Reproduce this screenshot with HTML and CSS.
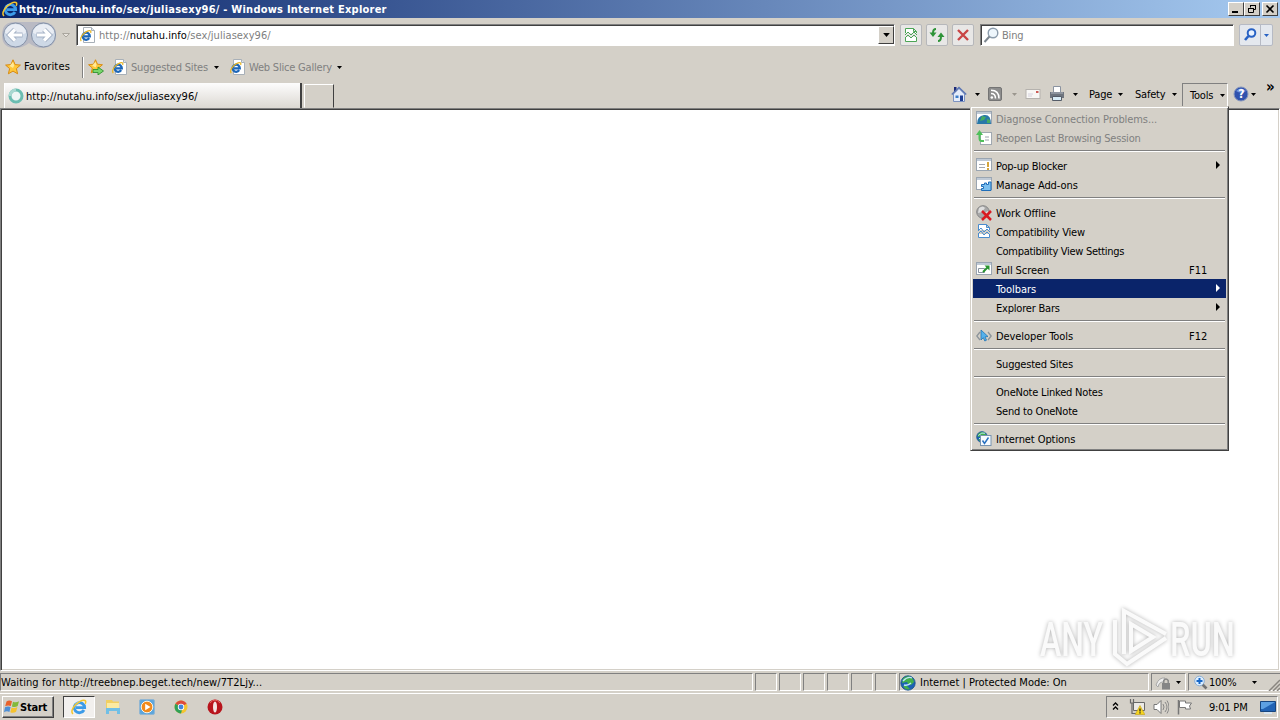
FILE: index.html
```html
<!DOCTYPE html>
<html lang="en">
<head>
    <meta charset="UTF-8">
    <meta name="viewport" content="width=device-width, initial-scale=1.0">
    <title>Windows Internet Explorer</title>
    <link rel="stylesheet" href="styles.css">
</head>
<body>

    <!-- Shared icons -->
    <svg class="sprite">
        <symbol id="ie" viewBox="0 0 16 16">
            <path d="M13 11A5.200 5 0 1 1 13.600 8.600H5" fill="none" stroke="#3c9be8" stroke-width="2.900"/>
            <path d="M4 7q1-3.500 4.500-3.600" fill="none" stroke="#a8e0ff" stroke-width="1.200"/>
            <path d="M2 15C-1 12.500 3 5.500 9 2.300c4.500-2.200 6.800-.8 5.200 2.500" fill="none" stroke="#f5c52c" stroke-width="1.500"/>
        </symbol>
        <symbol id="iepage" viewBox="0 0 16 16">
            <path d="M3.500 .5h8l3 3v12h-11z" fill="#fff" stroke="#a8b0b8"/>
            <path d="M11.500 .5v3h3" fill="#dde6ee" stroke="#a8b0b8"/>
            <path d="M9.200 11.200A3.600 3.600 0 1 1 9.800 9.300H4" fill="none" stroke="#1c66b8" stroke-width="2.300"/>
            <path d="M1.300 14C-.8 12 2.600 6.600 6.600 4.600c3.400-1.600 5-1 4 1.400" fill="none" stroke="#e8b420" stroke-width="1.200"/>
        </symbol>
        <symbol id="star" viewBox="0 0 16 16">
            <path d="M8 .8l2.100 4.800 5.300.5-4 3.500 1.200 5.200L8 12.100l-4.600 2.700 1.200-5.200-4-3.500 5.300-.5z" fill="#ffc83a" stroke="#d88a10"/>
            <path d="M8 3l1.200 3.400L8 9 4.500 7z" fill="#ffe998"/>
        </symbol>
        <symbol id="caret" viewBox="0 0 5 3"><path d="M0 0h5L2.500 3z" fill="currentColor"/></symbol>
        <symbol id="win" viewBox="0 0 16 14">
            <rect x=".5" y=".5" width="15" height="12" fill="#fff" stroke="#9aa5b1"/>
            <path d="M1 2h14" stroke="#c0cad6" stroke-width="2"/>
        </symbol>
        <symbol id="globe" viewBox="0 0 16 16">
            <circle cx="8" cy="8" r="7.200" fill="#1c62b4" stroke="#164c88" stroke-width=".8"/>
            <path d="M3 3.500Q7 0 11 2q3 2 3 5l-3 3-3-1-1-2-5 1zM3 11l4 0 3 3q-4 2-7-3z" fill="#43b04a"/>
            <path d="M3 6q5-5 9-3M4 10q4 1 7-2" fill="none" stroke="#bfe6ff" stroke-width="1.300"/>
        </symbol>
    </svg>

    <div class="titlebar">
        <svg class="title-icon"><use href="#ie"/></svg>
        <span class="title-text">http://nutahu.info/sex/juliasexy96/ - Windows Internet Explorer</span>
        <div class="win-buttons">
            <button class="win-btn"><svg viewBox="0 0 12 10"><path d="M2 8h6" stroke="#000" stroke-width="2"/></svg></button>
            <button class="win-btn"><svg viewBox="0 0 12 10"><path d="M4.500 3.500v-2h5v4h-2M4 1.500h6M2.500 4.500h5v4h-5zM2 4.500h6" fill="none" stroke="#000"/></svg></button>
            <button class="win-btn close"><svg viewBox="0 0 12 10"><path d="M2.500 1.500l7 7M9.500 1.500l-7 7" stroke="#000" stroke-width="1.600"/></svg></button>
        </div>
    </div>

    <div class="navbar">
        <svg class="nav-arrows" viewBox="0 0 58 30">
            <path d="M15 2h28q13 1 13 13T43 28q-8 0-14-5-6 5-14 5Q2 28 2 15T15 2z" fill="#b9bac4"/>
            <circle cx="15.500" cy="15" r="12" fill="#cdd8e6" stroke="#8390a6"/>
            <circle cx="43.500" cy="15" r="12" fill="#cdd8e6" stroke="#8390a6"/>
            <path d="M5 13a10.500 9 0 0 1 21 0q-10 5-21 0zM33 13a10.500 9 0 0 1 21 0q-10 5-21 0z" fill="#e9edf4"/>
            <path d="M22.500 15H11M15 9.500L9.500 15l5.500 5.500M36.500 15H48M44 9.500l5.500 5.500-5.500 5.500" fill="none" stroke="#a3b0c4" stroke-width="5"/>
            <path d="M22 15H11M15 9.500L9.500 15l5.500 5.500M37 15h11M44 9.500l5.500 5.500-5.500 5.500" fill="none" stroke="#fff" stroke-width="3.200"/>
        </svg>
        <svg class="history" viewBox="0 0 8 5"><path d="M.5 .5h7L4 4z" fill="#e8e4de" stroke="#aaa69e"/></svg>
        <div class="address">
            <svg class="ico"><use href="#iepage"/></svg>
            <span class="url">http://<b>nutahu.info</b>/sex/juliasexy96/</span>
            <button class="drop"><svg class="caret big"><use href="#caret"/></svg></button>
        </div>
        <button class="tool-btn"><svg viewBox="0 0 16 16"><path d="M2.500 6V1.500h8l3 3V6M2.500 10v4.500h11V10M10.500 1.500v3h3" fill="#fff" stroke="#4ca556"/><path d="M2 8l3-3 3 3 3-3 3 3M2 11l3-3 3 3 3-3 3 3" fill="none" stroke="#4ca556"/></svg></button>
        <button class="tool-btn"><svg viewBox="0 0 16 16"><path d="M7 2Q4 2 4 6M9 14q3 0 3-4.500" fill="none" stroke="#2e9338" stroke-width="2"/><path d="M.5 5.500h7L4 10zM8.500 10h7L12 5.500z" fill="#2e9338"/></svg></button>
        <button class="tool-btn"><svg viewBox="0 0 16 16"><path d="M3 3l10 10M13 3L3 13" stroke="#c94545" stroke-width="2.400"/></svg></button>
        <div class="search">
            <svg class="ico" viewBox="0 0 16 16"><circle cx="10" cy="6" r="4.800" fill="#eef6fc" stroke="#8c9cac" stroke-width="1.400"/><path d="M6.500 9.500L1.500 15" stroke="#7d8790" stroke-width="2"/></svg>
            <span>Bing</span>
        </div>
        <div class="search-btns">
            <button><svg class="ico" viewBox="0 0 16 16"><circle cx="9.500" cy="6" r="3.800" fill="#e8f2ff" stroke="#2862c4" stroke-width="2"/><path d="M6.500 9L3 13" stroke="#2862c4" stroke-width="2.600"/></svg></button>
            <button class="narrow"><svg class="caret blue"><use href="#caret"/></svg></button>
        </div>
    </div>

    <div class="favbar">
        <svg class="ico"><use href="#star"/></svg>
        <span class="fav-label">Favorites</span>
        <div class="divider"></div>
        <svg class="ico add" viewBox="0 0 16 16"><use href="#star" width="15" height="15"/><path d="M5 10.500h5V8l5.500 4-5.500 4v-2.500H5z" fill="#7ad66c" stroke="#238a25" stroke-width=".8"/></svg>
        <svg class="ico page"><use href="#iepage"/></svg>
        <span class="dim suggested">Suggested Sites</span>
        <svg class="caret"><use href="#caret"/></svg>
        <svg class="ico page2"><use href="#iepage"/></svg>
        <span class="dim slice">Web Slice Gallery</span>
        <svg class="caret"><use href="#caret"/></svg>
    </div>

    <div class="tabrow">
        <div class="tab">
            <svg class="ico" viewBox="0 0 16 16"><circle cx="8" cy="8" r="6" fill="#eef6f5" stroke="#6bbdb1" stroke-width="3"/><path d="M2 8a6 6 0 0 1 6-6" fill="none" stroke="#a9d8d1" stroke-width="3"/></svg>
            <span>http://nutahu.info/sex/juliasexy96/</span>
        </div>
        <div class="newtab"></div>
        <div class="commands">
            <svg class="ico home" viewBox="0 0 16 16"><path d="M3 1h2.500v5H3z" fill="#1c2a78"/><path d="M2.500 8L8 2.500 13.500 8v7.500h-11z" fill="#e4ecfa" stroke="#7c92c0"/><path d="M.8 8.500L8 1.500l7.200 7" fill="none" stroke="#5a75b4" stroke-width="1.500"/><path d="M9 9.500h3V15H9z" fill="#1f3f94"/><path d="M4.500 9.500h3V12h-3z" fill="#3c7ec8"/></svg>
            <svg class="caret c1"><use href="#caret"/></svg>
            <svg class="ico rss" viewBox="0 0 16 16"><rect x="1.500" y="1.500" width="13" height="13" rx="1.500" fill="#8d8d8d" stroke="#747474"/><circle cx="4.800" cy="11.500" r="1.300" fill="#fff"/><path d="M4 7.500q4.500 0 4.500 5M4 4.200q8 0 8 8.300" fill="none" stroke="#fff" stroke-width="1.500"/></svg>
            <svg class="caret c2 off"><use href="#caret"/></svg>
            <svg class="ico mail" viewBox="0 0 16 16"><rect x="1" y="3.500" width="14" height="9" fill="#f8f7f5" stroke="#b5b2ae"/><path d="M3 8h5M3 10h4" stroke="#d4d0dc"/><path d="M11 5h2.500v2H11z" fill="#cc5b55"/></svg>
            <svg class="ico print" viewBox="0 0 16 16"><path d="M4.500 6V.5h7V6" fill="#fff" stroke="#8b93a0"/><path d="M1 6h14v6H1z" fill="#6e747e"/><path d="M2 7h12" stroke="#aeb5c0"/><path d="M3.500 10.500h9v4h-9z" fill="#d9edf8" stroke="#555c68"/></svg>
            <svg class="caret c3"><use href="#caret"/></svg>
            <span class="cmd page-cmd">Page</span><svg class="caret"><use href="#caret"/></svg>
            <span class="cmd safety-cmd">Safety</span><svg class="caret"><use href="#caret"/></svg>
            <div class="tools"><span>Tools</span><svg class="caret"><use href="#caret"/></svg></div>
            <svg class="ico help" viewBox="0 0 16 16"><circle cx="8" cy="8" r="7" fill="#3153ae" stroke="#8797bd"/><path d="M3 5q5-5 10 0-5 3-10 0" fill="#7596df"/><text x="5.200" y="12.200">?</text></svg>
            <svg class="caret"><use href="#caret"/></svg>
            <span class="more">»</span>
        </div>
    </div>

    <div class="viewport">
        <svg class="watermark" viewBox="0 0 210 66">
            <g class="mark">
                <text x="5" y="52" textLength="63" lengthAdjust="spacingAndGlyphs">ANY</text>
                <text x="135" y="52" textLength="65" lengthAdjust="spacingAndGlyphs">RUN</text>
                <path d="M80 16v34l12 10 39-26M89 50V7l42 23M96 20v27l22-14z"/>
            </g>
        </svg>
    </div>

    <div class="statusbar">
        <div class="pane status-text">Waiting for http://treebnep.beget.tech/new/7T2Ljy...</div>
        <div class="pane small"></div>
        <div class="pane small"></div>
        <div class="pane small"></div>
        <div class="pane small"></div>
        <div class="pane small"></div>
        <div class="pane small"></div>
        <div class="pane zone"><svg class="ico"><use href="#globe"/></svg><span>Internet | Protected Mode: On</span></div>
        <div class="pane lock">
            <svg class="ico" viewBox="0 0 16 16"><path d="M1 10Q4 2 10 3l-2 4q-4 0-5 5z" fill="#eee" stroke="#a6a6a6"/><rect x="7" y="8" width="8" height="6.500" fill="#858585"/><path d="M8.800 8V5.500q2.200-3 4.400 0V8" fill="none" stroke="#858585" stroke-width="1.400"/></svg>
            <svg class="caret"><use href="#caret"/></svg>
        </div>
        <div class="pane zoom">
            <svg class="ico" viewBox="0 0 16 16"><path d="M9 9l4.500 4.500" stroke="#727272" stroke-width="2.600"/><circle cx="6.500" cy="6" r="4.800" fill="#dceeff" stroke="#8badd2"/><path d="M6.500 3v6M3.500 6h6" stroke="#1767c7" stroke-width="2"/></svg>
            <span>100%</span>
            <svg class="caret"><use href="#caret"/></svg>
            <svg class="grip" viewBox="0 0 12 12"><path d="M1 12L12 1M5 12l7-7M9 12l3-3" stroke="#8a8680" stroke-width="1.500"/></svg>
        </div>
    </div>

    <div class="taskbar">
        <button class="start">
            <svg class="ico" viewBox="0 0 16 16"><path d="M2.500 2.500Q5 .8 8 2.200L6.800 7Q4 5.800 1.200 7.300z" fill="#e8622c"/><path d="M9 2.700q3 1.300 6-.4L13.700 7Q11 8.700 7.900 7.400z" fill="#83b93a"/><path d="M1 8.300q2.800-1.600 5.600-.3l-1.200 4.900Q2.600 11.700 0 13.200z" fill="#4e8fd6"/><path d="M7.600 8.400q3 1.300 5.800-.3l-1.300 4.700q-2.800 1.700-5.800.4z" fill="#f6c22e"/></svg>
            <span>Start</span>
        </button>
        <div class="task-active"><svg><use href="#ie"/></svg></div>
        <svg class="ico t-folder" viewBox="0 0 16 16"><path d="M1 1h6l1 1.500h6V12H1z" fill="#f1cf62"/><path d="M2 4h12v6H2z" fill="#fbeaa2"/><path d="M1 9h14v6h-3v-3H4v3H1z" fill="#70bfe6"/></svg>
        <svg class="ico t-media" viewBox="0 0 16 16"><rect x=".5" y=".5" width="15" height="15" rx="1.500" fill="#5ea6dc" stroke="#91b6d2"/><circle cx="8" cy="8" r="5.800" fill="#f18a1c" stroke="#fff3e0"/><path d="M6.200 4.800v6.400L11.500 8z" fill="#fff"/></svg>
        <svg class="ico t-chrome" viewBox="0 0 16 16"><circle cx="8" cy="8" r="6.500" fill="#f4c531"/><path d="M8 8L2.400 4.800a6.500 6.500 0 0 1 11.200 0z" fill="#dd4b3c"/><path d="M2.400 4.800A6.500 6.500 0 0 0 8 14.500L9.500 9z" fill="#30a057"/><circle cx="8" cy="8" r="3.200" fill="#fff"/><circle cx="8" cy="8" r="2.400" fill="#4285dc"/></svg>
        <svg class="ico t-opera" viewBox="0 0 16 16"><circle cx="8" cy="8" r="7.500" fill="#b8141c"/><path d="M3 4Q8-2 13 4" fill="none" stroke="#e8645f"/><ellipse cx="8" cy="8" rx="2" ry="5.600" fill="#f4e4e2"/></svg>
        <div class="tray">
            <svg class="chev" viewBox="0 0 7 8"><path d="M1 3.500L3.500 1 6 3.500M1 7.500L3.500 5 6 7.500" fill="none" stroke="#000" stroke-width="1.300"/></svg>
            <svg class="ico net" viewBox="0 0 16 16"><path d="M4.500 3.500h11v8h-11z" fill="#eceae6" stroke="#686868"/><path d="M1.500 0v4h3V0M3 4v10.500h6" fill="none" stroke="#686868" stroke-width="1.200"/><path d="M11 6.500l4.800 9H6.200z" fill="#f6d51f" stroke="#c2a010" stroke-width=".6"/><path d="M11 9.500v3M11 13.300v1.200" stroke="#222" stroke-width="1.300"/></svg>
            <svg class="ico vol" viewBox="0 0 16 16"><path d="M1 5.500h3l4-4v13l-4-4H1z" fill="#fff" stroke="#777"/><path d="M10 5q2 3 0 6M12 3q4 5 0 10M14 1.500q4 6.500 0 13" fill="none" stroke="#888"/></svg>
            <svg class="ico flag" viewBox="0 0 16 16"><path d="M1.500 1v14.500" stroke="#777" stroke-width="1.500"/><path d="M2.500 2h6v2h6l-2 3 1 3h-5V8.500h-6z" fill="#fff" stroke="#777"/></svg>
            <span class="clock">9:01 PM</span>
            <svg class="ico desk" viewBox="0 0 16 16"><path d="M.5 2.500h15v10H.5z" fill="#2263b4" stroke="#17457f"/><path d="M1 3h14L3 10H1z" fill="#5da0e2"/><path d="M4 14h8" stroke="#d8e4ef" stroke-width="2"/></svg>
        </div>
    </div>

    <!-- Tools menu -->
    <div class="menu">
        <div class="item disabled wide"><svg viewBox="0 0 16 16"><use href="#win" width="16" height="14"/><path d="M1 13q0-8 7-9t7 9z" fill="#2878a8"/><path d="M6 5l4 1-2 3-4 1zM11 8l3 1v3h-3z" fill="#45ab62"/></svg><span>Diagnose Connection Problems...</span></div>
        <div class="item disabled"><svg viewBox="0 0 16 16"><rect x="4.500" y="2.500" width="11" height="12" fill="#fff" stroke="#a0a8b0"/><path d="M9 7h4M9 10h4" stroke="#9aa2aa"/><path d="M8 11H5.500q-2 0-2-3V3" fill="none" stroke="#4fc05a" stroke-width="2"/><path d="M0 5l3.500-5L7 5z" fill="#4fc05a"/></svg><span>Reopen Last Browsing Session</span></div>
        <div class="sep"></div>
        <div class="item"><svg viewBox="0 0 16 16"><use href="#win" width="16" height="14"/><path d="M3 6.500h6M3 9.500h6" stroke="#a4a7b0"/><path d="M12 4v5M12 10v2" stroke="#d5a53c" stroke-width="2"/></svg><span>Pop-up Blocker</span><i class="arrow"></i></div>
        <div class="item wide"><svg viewBox="0 0 16 16"><use href="#win" width="16" height="14"/><path d="M5.500 7.500h3V6h2v1.500h2V5H15v8.500H5.500v-2h2v-2h-2z" fill="#7cc0f0" stroke="#1f6db8"/></svg><span>Manage Add-ons</span></div>
        <div class="sep"></div>
        <div class="item wide"><svg viewBox="0 0 16 16"><circle cx="7" cy="7" r="6.300" fill="#a8a8a8" stroke="#858585"/><path d="M3 3q4-3 6 0L6 7 2 8zM8 8l4-2v4z" fill="#dedede"/><path d="M6 6l9 9M15 6l-9 9" stroke="#d91b22" stroke-width="2.500"/></svg><span>Work Offline</span></div>
        <div class="item"><svg viewBox="0 0 16 16"><path d="M2.500 6V.5h8l3 3V6M2.500 10v3.500h11V10M10.500 .5v3h3" fill="#fff" stroke="#4a8ccd"/><path d="M2 7l3-3 3 4 3-3 3 3M2 10l3-3 3 4 3-3 3 3" fill="none" stroke="#4a8ccd"/></svg><span>Compatibility View</span></div>
        <div class="item"><svg></svg><span class="tight">Compatibility View Settings</span></div>
        <div class="item wide"><svg viewBox="0 0 16 16"><use href="#win" width="16" height="14"/><path d="M2.500 6.500h6v4h-6z" fill="#fff" stroke="#8995a1"/><path d="M7 10l5-5" stroke="#28942f" stroke-width="2"/><path d="M8.500 3.500h5v5z" fill="#28942f"/></svg><span>Full Screen</span><em>F11</em></div>
        <div class="item selected wide"><svg></svg><span>Toolbars</span><i class="arrow"></i></div>
        <div class="item"><svg></svg><span>Explorer Bars</span><i class="arrow"></i></div>
        <div class="sep"></div>
        <div class="item wide"><svg viewBox="0 0 16 16"><path d="M4 4L.8 8 4 12M12 4l3.200 4L12 12" fill="none" stroke="#8d949a" stroke-width="1.300"/><path d="M5 2l7 6.500-3 .4 1.500 3.300-1.700.8-1.500-3.300L5 12z" fill="#55b1ec" stroke="#2574b2" stroke-width=".8"/></svg><span>Developer Tools</span><em>F12</em></div>
        <div class="sep"></div>
        <div class="item"><svg></svg><span>Suggested Sites</span></div>
        <div class="sep"></div>
        <div class="item"><svg></svg><span>OneNote Linked Notes</span></div>
        <div class="item"><svg></svg><span>Send to OneNote</span></div>
        <div class="sep"></div>
        <div class="item wide"><svg viewBox="0 0 16 16"><use href="#globe" width="12" height="12"/><rect x="4.500" y="4.500" width="10.500" height="10" fill="#f8fbff" stroke="#7894b0"/><path d="M6.500 9.500l2 3 4-6" fill="none" stroke="#2871c0" stroke-width="1.500"/></svg><span>Internet Options</span></div>
    </div>

</body>
</html>
```
FILE: styles.css
```css
body {
    font-family: "DejaVu Sans Condensed", "DejaVu Sans", sans-serif;
    font-size: 11px;
    letter-spacing: -0.2px;
    background-color: #d4d0c8;
    margin: 0;
    height: 720px;
    display: flex;
    flex-direction: column;
    overflow: hidden;
    white-space: nowrap;
    color: #000;
}
svg {
    display: block;
    flex: none;
}
button {
    padding: 0;
    border: none;
    background: none;
    font: inherit;
    display: flex;
    align-items: center;
    justify-content: center;
}
.sprite {
    position: absolute;
    width: 0;
    height: 0;
}
.ico {
    width: 16px;
    height: 16px;
}
.caret {
    width: 5px;
    height: 3px;
}
.caret.big {
    width: 7px;
    height: 4px;
}
.caret.blue {
    color: #2862c4;
}
.caret.off {
    color: #9a968e;
}

/* Title bar */
.titlebar {
    height: 18px;
    flex: none;
    display: flex;
    align-items: center;
    background: linear-gradient(to right, #0a246a, #a6caf0);
    color: #fff;
    font-weight: bold;
}
.title-icon {
    width: 16px;
    height: 16px;
    margin: 0 1px 0 2px;
}
.title-text {
    flex: 1;
    letter-spacing: 0.23px;
}
.win-buttons {
    display: flex;
    margin-right: 2px;
}
.win-btn {
    width: 16px;
    height: 14px;
    box-sizing: border-box;
    background-color: #d4d0c8;
    border: 1px solid;
    border-color: #fff #404040 #404040 #fff;
}
.win-btn svg {
    width: 12px;
    height: 10px;
}
.win-btn.close {
    margin-left: 2px;
}

/* Address row */
.navbar {
    height: 34px;
    flex: none;
    display: flex;
    align-items: center;
}
.nav-arrows {
    width: 58px;
    height: 30px;
}
.history {
    width: 8px;
    height: 5px;
    margin: 0 10px 0 4px;
}
.address, .search {
    box-sizing: border-box;
    height: 22px;
    display: flex;
    align-items: center;
    background-color: #fff;
    border: 1px solid;
    border-color: #808080 #fff #fff #808080;
    box-shadow: inset 1px 1px #404040;
    color: #808080;
}
.address {
    width: 819px;
    margin-left: -4px;
    padding-left: 3px;
}
.url {
    flex: 1;
    margin-left: 3px;
    padding-top: 1px;
    letter-spacing: 0.05px;
}
.url b {
    font-weight: normal;
    color: #000;
}
.drop {
    width: 16px;
    height: 18px;
    box-sizing: border-box;
    background-color: #d4d0c8;
    border: 1px solid;
    border-color: #fff #404040 #404040 #fff;
}
.tool-btn {
    width: 22px;
    height: 22px;
    box-sizing: border-box;
    margin-left: 4px;
    background-color: #e8e7e6;
    border: 1px solid #b6b7ba;
    border-radius: 2px;
}
.address + .tool-btn {
    margin-left: 5px;
}
.tool-btn svg {
    width: 16px;
    height: 16px;
}
.search {
    width: 254px;
    margin-left: 6px;
    padding-left: 2px;
}
.search span {
    margin-left: 3px;
    padding-top: 1px;
}
.search-btns {
    display: flex;
    margin-left: 5px;
    background-color: #e4e8ee;
    border: 1px solid #b6bac4;
    border-radius: 2px;
}
.search-btns button {
    width: 20px;
    height: 20px;
}
.search-btns .narrow {
    width: 12px;
    border-left: 1px solid #b6bac4;
}

/* Favorites row */
.favbar {
    height: 30px;
    flex: none;
    display: flex;
    align-items: center;
    padding-left: 5px;
}
.fav-label {
    width: 58px;
    margin: -2px 0 0 3px;
    letter-spacing: 0.15px;
}
.divider {
    width: 1px;
    height: 21px;
    background-color: #808080;
    border-right: 1px solid #fff;
}
.add {
    margin-left: 4px;
}
.page {
    margin-left: 8px;
}
.page2 {
    margin-left: 11px;
}
.dim {
    color: #808080;
    margin-left: 3px;
}
.suggested {
    width: 83px;
}
.slice {
    width: 88px;
}

/* Tabs and command bar */
.tabrow {
    height: 26px;
    flex: none;
    display: flex;
    align-items: flex-end;
    padding-left: 4px;
}
.tab {
    box-sizing: border-box;
    width: 298px;
    height: 25px;
    display: flex;
    align-items: center;
    padding: 1px 0 0 3px;
    background: linear-gradient(#fdfdfd, #dcd8d2);
    border-left: 1px solid #fff;
    border-right: 2px solid #404040;
}
.tab span {
    margin-left: 2px;
    letter-spacing: 0.05px;
}
.newtab {
    box-sizing: border-box;
    width: 30px;
    height: 24px;
    margin-left: 2px;
    border: 1px solid;
    border-color: #fff #404040 transparent #fff;
}
.commands {
    flex: 1;
    height: 26px;
    display: flex;
    align-items: center;
    margin-left: 617px;
    margin-bottom: 1px;
}
.c1 {
    margin-left: 8px;
}
.rss {
    margin-left: 7px;
}
.c2 {
    margin-left: 9px;
}
.mail {
    margin-left: 8px;
}
.print {
    margin-left: 8px;
}
.c3 {
    margin-left: 8px;
}
.cmd {
    margin-left: 11px;
}
.page-cmd {
    width: 29px;
}
.safety-cmd {
    width: 37px;
    margin-left: 12px;
}
.tools {
    box-sizing: border-box;
    width: 46px;
    height: 24px;
    margin: 2px 0 0 5px;
    padding: 0 2px 0 7px;
    display: flex;
    align-items: center;
    justify-content: space-between;
    border: 1px solid;
    border-color: #808080 #fff #fff #808080;
}
.help {
    margin: 0 2px 0 5px;
}
.help text {
    fill: #fff;
    font-size: 12px;
    font-weight: bold;
}
.more {
    font-size: 15px;
    font-weight: bold;
    margin: -14px 0 0 10px;
}

/* Page */
.viewport {
    flex: 1;
    box-sizing: border-box;
    background-color: #fff;
    border: 1px solid;
    border-color: #808080 #fff #fff #808080;
    box-shadow: inset 1px 1px #404040, inset -1px -1px #d4d0c8;
    display: flex;
    align-items: flex-end;
    justify-content: flex-end;
}
.watermark {
    width: 210px;
    height: 66px;
    margin-right: 34px;
}
.mark {
    filter: drop-shadow(0 0 2px rgba(0, 0, 0, 0.3));
    fill: #fafafa;
}
.mark text {
    font-family: Roboto, sans-serif;
    font-size: 49px;
    font-weight: 500;
    letter-spacing: 0;
}
.mark path {
    fill: none;
    stroke: #fafafa;
    stroke-width: 4;
}

/* Status bar */
.statusbar {
    height: 22px;
    flex: none;
    display: flex;
    align-items: center;
    border-bottom: 1px solid #fff;
}
.pane {
    box-sizing: border-box;
    height: 18px;
    display: flex;
    align-items: center;
    border: 1px solid;
    border-color: #808080 #fff #fff #808080;
    margin-right: 2px;
    padding-top: 1px;
}
.status-text {
    width: 753px;
    letter-spacing: 0.09px;
}
.small {
    width: 22px;
}
.zone {
    width: 250px;
    letter-spacing: 0;
}
.zone span {
    margin-left: 4px;
}
.lock {
    width: 35px;
    padding-left: 3px;
}
.lock .caret {
    margin-left: 5px;
}
.zoom {
    flex: 1;
    margin-right: 0;
    padding-left: 4px;
    border-right: none;
}
.zoom span {
    width: 43px;
}
.grip {
    width: 12px;
    height: 12px;
    margin: 5px 0 0 auto;
}

/* Task bar */
.taskbar {
    height: 26px;
    flex: none;
    display: flex;
    align-items: center;
}
.start {
    box-sizing: border-box;
    width: 52px;
    height: 22px;
    margin-left: 2px;
    border: 1px solid;
    border-color: #fff #404040 #404040 #fff;
    box-shadow: inset -1px -1px #808080;
    font-weight: bold;
    letter-spacing: -0.2px;
    justify-content: flex-start;
    padding-left: 1px;
}
.task-active {
    box-sizing: border-box;
    width: 32px;
    height: 22px;
    margin-left: 9px;
    display: flex;
    align-items: center;
    justify-content: center;
    background-color: #f2f0ee;
    border: 1px solid;
    border-color: #404040 #fff #fff #404040;
}
.task-active svg {
    width: 16px;
    height: 16px;
}
.t-folder {
    margin-left: 10px;
}
.t-media, .t-chrome {
    margin-left: 18px;
}
.t-opera {
    margin-left: 18px;
}
.tray {
    box-sizing: border-box;
    width: 172px;
    height: 22px;
    margin: 0 2px 0 auto;
    display: flex;
    align-items: center;
    border: 1px solid;
    border-color: #808080 #fff #fff #808080;
}
.chev {
    width: 7px;
    height: 8px;
    margin: -2px 10px 0 5px;
}
.vol, .flag {
    margin-left: 8px;
}
.clock {
    width: 51px;
    margin-left: 16px;
}

/* Tools menu */
.menu {
    position: absolute;
    left: 970px;
    top: 106px;
    width: 259px;
    height: 345px;
    box-sizing: border-box;
    padding: 2px;
    background-color: #d4d0c8;
    border: 1px solid;
    border-color: #d4d0c8 #404040 #404040 #d4d0c8;
    box-shadow: inset 1px 1px #fff, inset -1px -1px #808080;
}
.item {
    height: 19px;
    display: flex;
    align-items: center;
    padding: 0 6px 0 3px;
}
.item svg {
    width: 16px;
    height: 16px;
    margin-right: 4px;
}
.item span {
    flex: 1;
    padding-top: 1px;
}
.item.wide span {
    letter-spacing: -0.08px;
}
.item .tight {
    letter-spacing: -0.3px;
}
.item em {
    font-style: normal;
    width: 31px;
    padding-top: 1px;
    letter-spacing: 0;
}
.item .arrow {
    border: 4px solid transparent;
    border-left: 4px solid currentColor;
    border-right: none;
    margin-bottom: 2px;
}
.disabled {
    color: #808080;
}
.selected {
    background-color: #0a246a;
    color: #fff;
}
.sep {
    height: 1px;
    margin: 3px 1px 4px;
    background-color: #808080;
    border-bottom: 1px solid #fff;
}
```
